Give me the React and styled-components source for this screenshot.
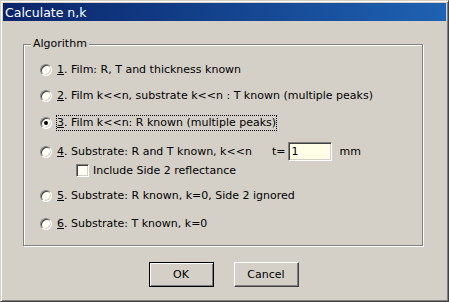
import React from "react";
import styled, { createGlobalStyle } from "styled-components";

const GlobalStyle = createGlobalStyle`
  html, body {
    margin: 0;
    padding: 0;
    background: #d4d0c8;
  }
  body {
    font-family: "DejaVu Sans", Verdana, sans-serif;
    font-size: 11px;
    color: #000;
  }
`;

const Window = styled.div`
  box-sizing: border-box;
  width: 449px;
  height: 302px;
  padding: 2px;
  background: #d4d0c8;
  border: 1px solid;
  border-color: #d4d0c8 #404040 #404040 #d4d0c8;
  box-shadow: inset 1px 1px 0 #fff, inset -1px -1px 0 #808080;
  display: flex;
  flex-direction: column;
`;

const TitleBar = styled.div`
  height: 18px;
  display: flex;
  align-items: center;
  padding-left: 2px;
  background: linear-gradient(to right, #0a246a, #1e62b2);
  color: #fff;
  font-size: 12.5px;
`;

const GroupBox = styled.div`
  position: relative;
  box-sizing: border-box;
  width: 400px;
  height: 202px;
  margin: 23px 0 0 20px;
  padding: 18px 0 0 16px;
  border: 1px solid #808080;
  box-shadow: 1px 1px 0 #fff, inset 1px 1px 0 #fff;
  display: flex;
  flex-direction: column;
`;

const Legend = styled.span`
  position: absolute;
  top: -8px;
  left: 7px;
  padding: 0 2px;
  line-height: 14px;
  background: #d4d0c8;
`;

const Row = styled.div`
  display: flex;
  align-items: center;
  height: ${(p) => p.$h || 14}px;
  margin-top: ${(p) => p.$mt || 0}px;
  margin-left: ${(p) => p.$indent || 0}px;
  white-space: nowrap;
`;

const RadioMark = styled.span`
  position: relative;
  flex: none;
  box-sizing: border-box;
  width: 12px;
  height: 12px;
  margin-right: 5px;
  border-radius: 50%;
  border: 1px solid;
  border-color: #808080 #fff #fff #808080;
  background: #fffff4;
  box-shadow: inset 1px 1px 0 #404040, inset -1px -1px 0 #d4d0c8;

  &::after {
    content: "";
    display: ${(p) => (p.$checked ? "block" : "none")};
    position: absolute;
    left: 3px;
    top: 3px;
    width: 4px;
    height: 4px;
    border-radius: 50%;
    background: #000;
  }
`;

const CheckMark = styled.span`
  flex: none;
  box-sizing: border-box;
  width: 13px;
  height: 13px;
  margin-right: 4px;
  border: 1px solid;
  border-color: #808080 #fff #fff #808080;
  background: #fffff4;
  box-shadow: inset 1px 1px 0 #404040, inset -1px -1px 0 #d4d0c8;
`;

const Label = styled.span`
  line-height: 14px;
  border: 1px dotted ${(p) => (p.$focus ? "#000" : "transparent")};
  margin: 0 -1px;
`;

const Key = styled.span`
  text-decoration: underline;
`;

const Field = styled.input`
  box-sizing: border-box;
  width: 44px;
  height: 19px;
  margin: 0 7px 0 3px;
  padding: 0 2px;
  font: inherit;
  color: #000;
  background: #ffffe8;
  border: 1px solid;
  border-color: #808080 #fff #fff #808080;
  box-shadow: inset 1px 1px 0 #404040, inset -1px -1px 0 #d4d0c8;
  outline: none;
`;

const Spacer = styled.span`
  display: inline-block;
  width: ${(p) => p.$w}px;
`;

const ButtonRow = styled.div`
  display: flex;
  justify-content: center;
  gap: 20px;
  margin-top: 16px;
  padding-right: 2px;
`;

const Button = styled.button`
  box-sizing: border-box;
  width: 65px;
  height: 25px;
  padding: 0;
  font: inherit;
  color: #000;
  background: #d4d0c8;
  border: 1px solid;
  border-color: ${(p) => (p.$default ? "#000" : "#fff #404040 #404040 #fff")};
  box-shadow: ${(p) =>
    p.$default
      ? "inset 1px 1px 0 #fff, inset -1px -1px 0 #808080"
      : "inset -1px -1px 0 #808080"};
`;

const options = [
  { key: "1", text: ". Film: R, T and thickness known", mt: 0 },
  { key: "2", text: ". Film k<<n, substrate k<<n : T known (multiple peaks)", mt: 12 },
  { key: "3", text: ". Film k<<n: R known (multiple peaks)", mt: 13, checked: true },
];

export default function App() {
  return (
    <>
      <GlobalStyle />
      <Window>
        <TitleBar>Calculate n,k</TitleBar>
        <GroupBox>
          <Legend>Algorithm</Legend>
          {options.map((o) => (
            <Row key={o.key} $mt={o.mt}>
              <RadioMark $checked={o.checked} />
              <Label $focus={o.checked}>
                <Key>{o.key}</Key>
                {o.text}
              </Label>
            </Row>
          ))}
          <Row $mt={12} $h={19}>
            <RadioMark />
            <Label>
              <Key>4</Key>. Substrate: R and T known, k&lt;&lt;n
            </Label>
            <Spacer $w={20} />
            <span>t=</span>
            <Field defaultValue="1" />
            <span>mm</span>
          </Row>
          <Row $mt={3} $h={13} $indent={36}>
            <CheckMark />
            <span>Include Side 2 reflectance</span>
          </Row>
          <Row $mt={12}>
            <RadioMark />
            <Label>
              <Key>5</Key>. Substrate: R known, k=0, Side 2 ignored
            </Label>
          </Row>
          <Row $mt={14}>
            <RadioMark />
            <Label>
              <Key>6</Key>. Substrate: T known, k=0
            </Label>
          </Row>
        </GroupBox>
        <ButtonRow>
          <Button $default>OK</Button>
          <Button>Cancel</Button>
        </ButtonRow>
      </Window>
    </>
  );
}
